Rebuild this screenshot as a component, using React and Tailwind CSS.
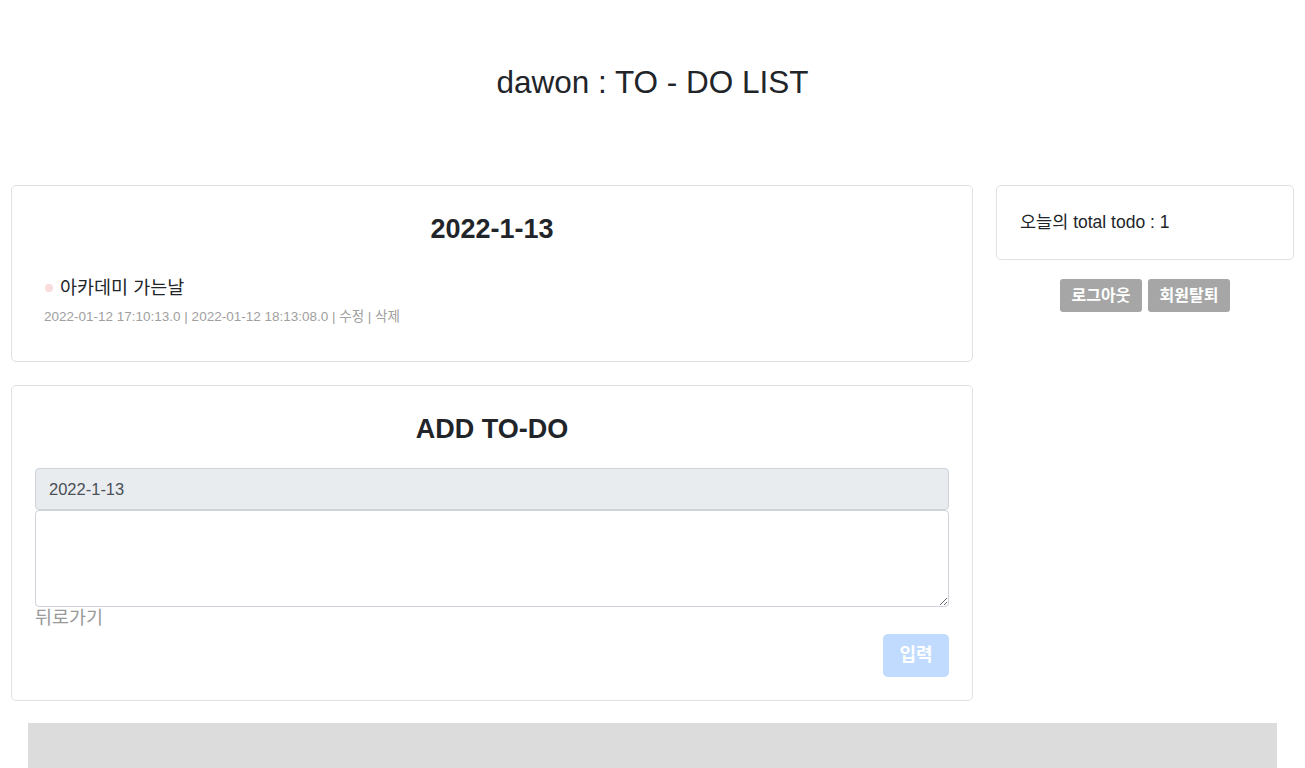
import React from 'react';

const font = { fontFamily: '"Liberation Sans", Arial, "Noto Sans CJK KR", sans-serif' };

function TodoCard() {
    return (
        <div className="border border-[#dee2e6] rounded-[5px] bg-white pt-[28px] pb-[34px] px-[32px]">
            <h3 className="text-center text-[27px] leading-[30px] font-bold text-[#212529]">2022-1-13</h3>
            <div className="mt-[30px] flex items-center">
                <span className="w-[8px] h-[8px] rounded-full bg-[#fadbde] ml-[1px] mr-[7px]"></span>
                <span className="text-[18.5px] leading-[27px] text-[#212529]">아카데미 가는날</span>
            </div>
            <p className="mt-[6px] text-[13.5px] leading-[20px] text-[#a0a0a0]">
                2022-01-12 17:10:13.0 | 2022-01-12 18:13:08.0 | 수정 | 삭제
            </p>
        </div>
    );
}

function AddTodo() {
    return (
        <div className="border border-[#dee2e6] rounded-[5px] bg-white pt-[27px] pb-[23px] px-[23px]">
            <h3 className="text-center text-[27px] leading-[33px] font-bold text-[#212529]">ADD TO-DO</h3>
            <div className="mt-[22px] h-[42px] flex items-center px-[13px] bg-[#e9ecef] border border-[#ced4da] rounded-[4px] text-[16.5px] text-[#495057]">
                2022-1-13
            </div>
            <textarea className="block w-full h-[97px] border border-[#ced4da] rounded-[4px] bg-white resize-y outline-none"></textarea>
            <a className="block text-[18.5px] leading-[22px] text-[#999999]">뒤로가기</a>
            <div className="flex justify-end mt-[5px]">
                <button className="w-[66px] h-[43px] rounded-[5px] bg-[#c0dbfe] text-white font-bold text-[18px]">입력</button>
            </div>
        </div>
    );
}

export default function App() {
    return (
        <div className="min-h-screen bg-white flex flex-col" style={font}>
            <header className="h-[185px] shrink-0 flex items-start justify-center pt-[62px]">
                <h2 className="text-[31.5px] leading-[40px] text-[#212529]">dawon : TO - DO LIST</h2>
            </header>
            <main className="px-[11px] flex gap-[23px] items-start">
                <div className="flex-1 flex flex-col gap-[23px]">
                    <TodoCard />
                    <AddTodo />
                </div>
                <div className="w-[298px] shrink-0">
                    <div className="border border-[#dee2e6] rounded-[5px] bg-white h-[75px] px-[23px] flex items-center">
                        <span className="text-[17.5px] text-[#212529]">오늘의 total todo : 1</span>
                    </div>
                    <div className="mt-[19px] flex justify-center gap-[6px]">
                        <button className="w-[82px] h-[33px] rounded-[3px] bg-[#a6a6a6] text-white font-bold text-[16px]">로그아웃</button>
                        <button className="w-[82px] h-[33px] rounded-[3px] bg-[#a6a6a6] text-white font-bold text-[16px]">회원탈퇴</button>
                    </div>
                </div>
            </main>
            <footer className="mx-[28px] mt-[22px] flex-1 min-h-[45px] bg-[#dcdcdc]"></footer>
        </div>
    );
}
